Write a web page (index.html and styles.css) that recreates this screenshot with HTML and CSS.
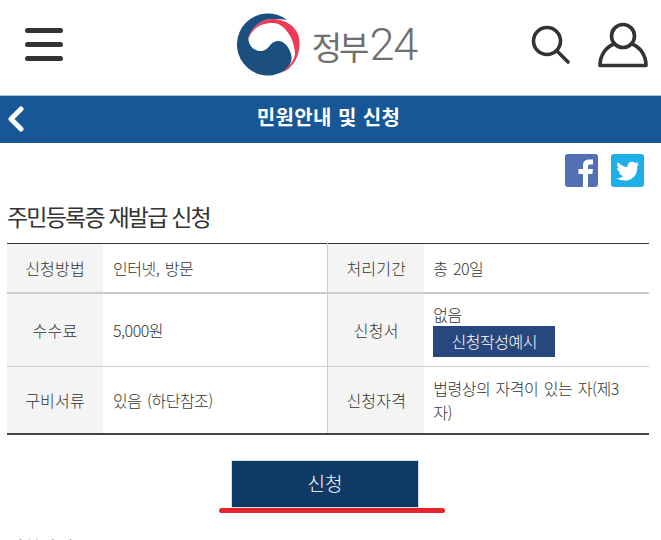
FILE: index.html
```html
<!DOCTYPE html>
<html lang="ko">
<head>
    <meta charset="UTF-8">
    <meta name="viewport" content="width=device-width, initial-scale=1.0">
    <title>주민등록증 재발급 신청</title>
    <link rel="stylesheet" href="styles.css">
</head>
<body>
    <!-- Top header -->
    <header class="header">
        <div class="menu-icon"><span></span><span></span><span></span></div>
        <div class="logo">
            <svg class="logo-mark" width="64" height="64" viewBox="-1 0 64 64">
                <path d="M49 7A31 31 0 1 0 46 58C52 54 55 47 53 41C51 33 45 27 39 28C32 29 31 37 24 38C17 39 11 33 10.500 27C10.300 25 10.500 23 12 21C16 12 26 5 36 6C41 6.500 45 6 49 7Z" fill="#1b4f7e"/>
                <path d="M12 21C16 12 26 5 36 6C50 7 62 16 61.500 30C62 43 55 55 44 60C52 53 57 46 57 40C56 23 45 10 35 10C23 9.500 12 17 10.500 27C10.300 25 10.500 23 12 21Z" fill="#ee3a57"/>
            </svg>
            <span class="logo-text">정부<span class="logo-num">24</span></span>
        </div>
        <div class="header-icons">
            <svg width="40" height="40" viewBox="0 0 40 40" fill="none" stroke="#333" stroke-width="3.600">
                <circle cx="16" cy="16" r="13.500"/>
                <path d="M26 26L37 37" stroke-linecap="round"/>
            </svg>
            <svg width="50" height="46" viewBox="0 0 50 46" fill="none" stroke="#333" stroke-width="3.600" stroke-linejoin="round">
                <circle cx="25" cy="14" r="11.500"/>
                <path d="M16 22C8 25 2 33 2 43.500H48C48 33 42 25 34 22"/>
            </svg>
        </div>
    </header>

    <!-- Title bar -->
    <div class="title-bar">
        <svg class="back" width="18" height="26" viewBox="0 0 18 26" fill="none" stroke="#fff" stroke-width="5" stroke-linecap="round" stroke-linejoin="round">
            <path d="M14 3L4 13L14 23"/>
        </svg>
        <h1>민원안내 및 신청</h1>
    </div>

    <div class="share">
        <svg width="33" height="33" viewBox="0 0 33 33">
            <rect width="33" height="33" rx="3" fill="#5470b5"/>
            <path d="M18 33V20H13.500V15H18V11.500C18 7.500 20.500 5.500 24 5.500H28V10.500H25C23.500 10.500 23 11.300 23 12.500V15H28L27.300 20H23V33Z" fill="#fff"/>
        </svg>
        <svg width="33" height="33" viewBox="0 0 33 33">
            <rect width="33" height="33" rx="3" fill="#1eaee8"/>
            <path d="M28 9.500C27 10 26 10.300 25 10.400C26 9.800 26.900 8.800 27.200 7.700C26.200 8.300 25.100 8.700 24 9C21.500 6.300 16.500 8 16.500 12C16.500 12.400 16.500 12.800 16.600 13.100C12.600 12.900 9.200 11 6.800 8C5.600 10.200 6.200 12.800 8.200 14.300C7.400 14.300 6.700 14 6 13.700C6 16 7.700 18 9.900 18.500C9.200 18.700 8.500 18.700 7.800 18.600C8.500 20.500 10.200 21.800 12.300 21.900C10 23.700 7.500 24.400 5 24.100C15.500 30.500 27.500 24 26.100 12.400C26.700 11.500 27.500 10.600 28 9.500Z" fill="#fff"/>
        </svg>
    </div>

    <h2 class="page-title">주민등록증 재발급 신청</h2>

    <table class="info-table">
        <tr class="row-first">
            <th>신청방법</th>
            <td>인터넷, 방문</td>
            <th class="second">처리기간</th>
            <td>총 20일</td>
        </tr>
        <tr class="row-second">
            <th>수수료</th>
            <td>5,000원</td>
            <th class="second">신청서</th>
            <td>없음<br><a class="sample-btn">신청작성예시</a></td>
        </tr>
        <tr class="row-third">
            <th>구비서류</th>
            <td>있음 (하단참조)</td>
            <th class="second">신청자격</th>
            <td>법령상의 자격이 있는 자(제3자)</td>
        </tr>
    </table>

    <div class="apply">
        <button class="apply-btn">신청</button>
        <div class="apply-line"></div>
    </div>

    <h3 class="section-title">신청방법</h3>
</body>
</html>
```

FILE: styles.css
```css
html {
    overflow: hidden;
}
body {
    margin: 0;
    padding: 0;
    height: 540px;
    overflow: hidden;
    font-family: "Noto Sans CJK KR", "Noto Sans", sans-serif;
    color: #333;
    background-color: #fff;
}

/* Header */
.header {
    display: flex;
    align-items: center;
    justify-content: space-between;
    height: 95px;
    padding: 0 13px 6px 25px;
    box-sizing: border-box;
}
.menu-icon {
    display: flex;
    flex-direction: column;
    gap: 9px;
    width: 38px;
}
.menu-icon span {
    display: block;
    height: 5px;
    background-color: #333;
    border-radius: 3px;
}
.logo {
    display: flex;
    align-items: center;
    gap: 11px;
    margin-left: 60px;
}
.logo-text {
    font-size: 33px;
    font-weight: 400;
    color: #707070;
    letter-spacing: -3px;
    line-height: 1;
}
.logo-num {
    font-family: Roboto, sans-serif;
    font-size: 45px;
    font-weight: 300;
    letter-spacing: -1px;
    margin-left: 3px;
}
.header-icons {
    display: flex;
    align-items: center;
    gap: 27px;
}

/* Title bar */
.title-bar {
    position: relative;
    display: flex;
    align-items: center;
    justify-content: center;
    height: 48px;
    box-sizing: border-box;
    padding: 0 4px 6px 0;
    border-top: 1px solid #a9c3dc;
    background-color: #175797;
}
.title-bar h1 {
    margin: 0;
    font-size: 20px;
    font-weight: 700;
    color: #fff;
    letter-spacing: 0.4px;
}
.back {
    position: absolute;
    left: 7px;
    top: 10px;
}

/* Share icons */
.share {
    display: flex;
    justify-content: flex-end;
    gap: 13px;
    padding: 11px 17px 0 0;
}

.page-title {
    margin: 14px 0 12px 7px;
    font-size: 23px;
    font-weight: 400;
    line-height: 30px;
    letter-spacing: -1.8px;
    color: #333;
}

/* Info table */
.info-table {
    width: 642px;
    margin-left: 7px;
    border-collapse: collapse;
    table-layout: fixed;
    border-top: 1px solid #333;
    border-bottom: 2px solid #444;
    font-size: 16px;
    letter-spacing: -0.5px;
    word-spacing: 1.5px;
    line-height: 24px;
}
.info-table th {
    width: 96px;
    padding: 0;
    font-weight: 300;
    letter-spacing: 0.2px;
    background-color: #f4f4f4;
}
.info-table th.second {
    border-left: 1px solid #ccc;
}
.info-table td {
    padding: 0 10px;
    font-weight: 300;
    word-break: break-all;
}
.info-table th.second + td {
    padding: 0 22px 0 9px;
}
.row-first {
    height: 49px;
    border-bottom: 2px solid #ccc;
}
.row-second {
    height: 74px;
    border-bottom: 1px solid #ccc;
}
.row-third {
    height: 67px;
}
.sample-btn {
    display: inline-block;
    width: 122px;
    height: 31px;
    line-height: 31px;
    text-align: center;
    background-color: #27487d;
    color: #fff;
}

/* Apply button */
.apply {
    display: flex;
    flex-direction: column;
    align-items: center;
    margin-top: 25px;
    margin-left: 3px;
}
.apply-btn {
    width: 188px;
    height: 48px;
    margin-right: 14px;
    border: 1px solid #d8dde3;
    background-color: #0e3a65;
    color: #fff;
    font-family: inherit;
    font-size: 19px;
    font-weight: 300;
    padding-bottom: 4px;
}
.apply-line {
    width: 226px;
    height: 5px;
    margin-top: 0;
    border-radius: 3px;
    background-color: #e3242b;
}
.section-title {
    margin: 21px 0 0 7px;
    font-size: 18px;
    font-weight: 400;
    color: #333;
}
```
